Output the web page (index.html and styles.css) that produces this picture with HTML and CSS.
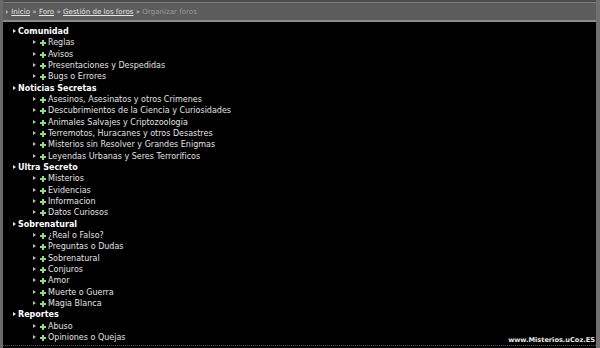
FILE: index.html
```html
<!DOCTYPE html>
<html lang="es">
<head>
    <meta charset="UTF-8">
    <title>Organizar foros</title>
    <link rel="stylesheet" href="styles.css">
</head>
<body>
    <div id="page">
        <div id="crumbs">
            <span class="crumb-arrow"></span>
            <a href="#">Inicio</a> &raquo; <a href="#">Foro</a> &raquo; <a href="#">Gestión de los foros</a> &raquo; <span class="current">Organizar foros</span>
        </div>

        <div id="tree">
            <ul class="cats">
                <li class="cat">
                    <span class="cat-name">Comunidad</span>
                    <ul class="forums">
                        <li>Reglas</li>
                        <li>Avisos</li>
                        <li>Presentaciones y Despedidas</li>
                        <li>Bugs o Errores</li>
                    </ul>
                </li>
                <li class="cat">
                    <span class="cat-name">Noticias Secretas</span>
                    <ul class="forums">
                        <li>Asesinos, Asesinatos y otros Crimenes</li>
                        <li>Descubrimientos de la Ciencia y Curiosidades</li>
                        <li>Animales Salvajes y Criptozoologia</li>
                        <li>Terremotos, Huracanes y otros Desastres</li>
                        <li>Misterios sin Resolver y Grandes Enigmas</li>
                        <li>Leyendas Urbanas y Seres Terroríficos</li>
                    </ul>
                </li>
                <li class="cat">
                    <span class="cat-name">Ultra Secreto</span>
                    <ul class="forums">
                        <li>Misterios</li>
                        <li>Evidencias</li>
                        <li>Informacion</li>
                        <li>Datos Curiosos</li>
                    </ul>
                </li>
                <li class="cat">
                    <span class="cat-name">Sobrenatural</span>
                    <ul class="forums">
                        <li>¿Real o Falso?</li>
                        <li>Preguntas o Dudas</li>
                        <li>Sobrenatural</li>
                        <li>Conjuros</li>
                        <li>Amor</li>
                        <li>Muerte o Guerra</li>
                        <li>Magia Blanca</li>
                    </ul>
                </li>
                <li class="cat">
                    <span class="cat-name">Reportes</span>
                    <ul class="forums">
                        <li>Abuso</li>
                        <li>Opiniones o Quejas</li>
                    </ul>
                </li>
            </ul>
        </div>

        <div id="watermark">www.Misterios.uCoz.ES</div>
    </div>
</body>
</html>
```

FILE: styles.css
```css
body {
    margin: 0;
    padding: 0;
    background: #000;
    font-family: 'DejaVu Sans', 'Verdana', sans-serif;
}

#page {
    position: relative;
    width: 600px;
    height: 348px;
    box-sizing: border-box;
    border-left: 3px solid #6a6a6a;
    border-right: 4px solid #707070;
    background: #000;
    overflow: hidden;
}

/* breadcrumb bar */
#crumbs {
    height: 18px;
    line-height: 19px;
    padding-left: 3px;
    border-top: 2px solid #4c4c4c;
    border-bottom: 2px solid #8a8a8a;
    box-shadow: inset 0 1px 0 #7c7c7c;
    background: #5c5c5c;
    font-size: 7.1px;
    color: #cfcfcf;
    margin-bottom: 2px;
}

#crumbs a {
    color: #e4e4e4;
    text-decoration: underline;
}

#crumbs .current {
    color: #9a9a9a;
}

.crumb-arrow {
    display: inline-block;
    width: 0;
    height: 0;
    border-left: 2px solid #bbb;
    border-top: 2px solid transparent;
    border-bottom: 2px solid transparent;
    margin-right: 1px;
}

/* forum tree */
#tree {
    padding: 2px 0 0 10px;
}

.cats,
.forums {
    list-style: none;
    margin: 0;
    padding: 0;
}

.cat-name,
.forums li {
    display: block;
    position: relative;
    line-height: 11.33px;
    height: 11.33px;
}

.cat-name {
    padding-left: 5px;
    font-size: 8px;
    font-weight: bold;
    color: #fff;
}

.cat-name::before,
.forums li::before {
    content: '';
    position: absolute;
    left: 0;
    top: 3px;
    border-left: 3px solid #e8e8e8;
    border-top: 2px solid transparent;
    border-bottom: 2px solid transparent;
}

.forums li {
    padding-left: 35px;
    font-size: 8px;
    color: #e2e2e2;
}

.forums li::before {
    left: 20px;
    border-left-color: #bdbdbd;
}

/* green plus */
.forums li::after {
    content: '';
    position: absolute;
    left: 27px;
    top: 3px;
    width: 6px;
    height: 6px;
    background:
        linear-gradient(#93d98a, #93d98a) 0 2px / 6px 2px no-repeat,
        linear-gradient(#93d98a, #93d98a) 2px 0 / 2px 6px no-repeat;
}

#page::after {
    content: '';
    position: absolute;
    left: 0;
    right: 0;
    bottom: 2px;
    border-bottom: 1px dotted #555;
}

#watermark {
    position: absolute;
    right: 0;
    bottom: 3px;
    z-index: 1;
    padding: 0 1px 0 3px;
    background: #000;
    font-size: 6.6px;
    font-weight: bold;
    color: #e8e8e8;
    line-height: 9px;
}
```
